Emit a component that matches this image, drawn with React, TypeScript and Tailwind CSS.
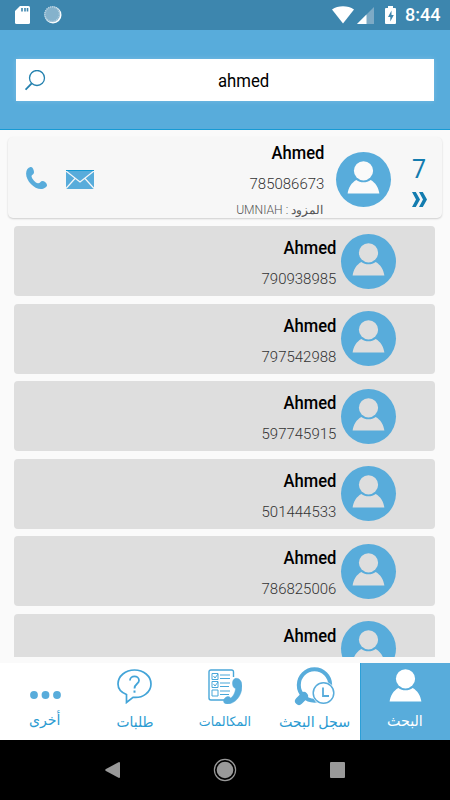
import React from "react";

type IconProps = {
    className?: string;
};

type RowProps = {
    id: number;
    name: string;
    phone?: string;
};

const contacts: RowProps[] = [
    { id: 1, name: "Ahmed", phone: "790938985" },
    { id: 2, name: "Ahmed", phone: "797542988" },
    { id: 3, name: "Ahmed", phone: "597745915" },
    { id: 4, name: "Ahmed", phone: "501444533" },
    { id: 5, name: "Ahmed", phone: "786825006" },
    { id: 6, name: "Ahmed" },
];

function Person({ className }: IconProps) {
    return (
        <svg viewBox="0 0 33 33" className={className} fill="currentColor">
            <circle cx="16.5" cy="9.8" r="9.6" />
            <path d="M.6 32.5C1.5 26.5 4.5 21.500 9.300 18.900C13.500 22 19.500 22 23.700 18.900C28.500 21.500 31.500 26.500 32.400 32.500Z" />
        </svg>
    );
}

function Avatar({ className }: IconProps) {
    return (
        <div className={`flex size-[55px] shrink-0 justify-center rounded-full bg-[#58acdb] pt-[9px] ${className}`}>
            <Person className="size-[33px]" />
        </div>
    );
}

function StatusBar() {
    return (
        <div className="flex h-[30px] shrink-0 items-center bg-[#3d86ae] pr-[10px] pl-[15px] text-white">
            <svg viewBox="0 0 15 18" className="h-[18px] w-[15px]">
                <path d="M5 0h8.500a1.500 1.500 0 0 1 1.500 1.500v15a1.500 1.500 0 0 1-1.500 1.500H1.500A1.500 1.500 0 0 1 0 16.500V5z" fill="currentColor" />
                <path d="M7 2v3.500M10 2v3.500M12.500 2v3.500" stroke="#3d86ae" strokeWidth="1.600" />
            </svg>
            <svg viewBox="0 0 18 18" className="ml-[14px] size-[18px]">
                <circle cx="9" cy="9" r="8.500" fill="#fff" />
                <circle cx="8.200" cy="8.200" r="7.800" fill="#85b2cc" />
                <circle cx="8.200" cy="8.200" r="7.300" fill="none" stroke="#b4cfdf" strokeWidth="1.600" strokeDasharray="1 1" />
            </svg>
            <svg viewBox="0 0 22 18" className="ml-auto h-[18px] w-[22px]">
                <path d="M0 3.500C6-.8 16-.8 22 3.500L11 17.500Z" fill="currentColor" />
            </svg>
            <svg viewBox="0 0 17 17" className="ml-[3px] size-[17px]">
                <path d="M17 0v17H0z" fill="#7daac5" />
                <path d="M9.500 7.500V17H0z" fill="currentColor" />
            </svg>
            <svg viewBox="0 0 11 18" className="ml-[11px] h-[18px] w-[11px]">
                <path d="M3 0h5v2h2q1 0 1 1v14q0 1-1 1H1q-1 0-1-1V3q0-1 1-1h2z" fill="currentColor" />
                <path d="M6.500 4.500 3 11h2.300v4.500L8.800 9H6.500z" fill="#3d86ae" />
            </svg>
            <span className="ml-[9px] w-[35px] text-[18px] leading-[30px] font-medium whitespace-nowrap">8:44</span>
        </div>
    );
}

function SearchHeader() {
    return (
        <div className="h-[100px] shrink-0 border-b border-[#179ad4] bg-[#58acdb] px-4 pt-[29px]">
            <div className="relative flex h-[42px] items-center justify-center bg-white pl-[38px] text-black shadow-[0_0_5px_rgba(255,255,255,0.2)]">
                <svg viewBox="0 0 21 21" className="absolute top-[11px] left-[9px] size-[21px]" fill="none" stroke="#2380ae">
                    <circle cx="12" cy="8" r="7.500" strokeWidth="1.300" />
                    <path d="M6.700 13.300 .6 19.700" strokeWidth="1.800" />
                </svg>
                <span className="scale-x-[0.93] text-[18px]">ahmed</span>
            </div>
        </div>
    );
}

function TopResult() {
    return (
        <div className="mx-2 mt-[7px] flex h-[81px] shrink-0 rounded-[5px] bg-[#f7f7f7] shadow-[0_1px_2px_rgba(0,0,0,0.18)]">
            <svg viewBox="0 0 21 22" className="mt-[30px] ml-[18px] h-[22px] w-[21px]" fill="#58acdb">
                <path d="M4.500 0C2 .7.200 2.800.1 6.500C0 13.500 8 22 15 22C18 22 20.700 20 21 18.500C21.200 16 18.500 14 16.500 14C14.500 14 14 16.500 12 16.300C9.500 16 5.500 11.500 5.500 9C6 7.500 8.200 7.500 8 5C7.800 2.500 6.500-.3 4.500 0Z" />
            </svg>
            <svg viewBox="0 0 28 19" className="mt-[32.500px] ml-[19px] h-[19px] w-[28px]">
                <path d="M0 0h28v19H0z" fill="#58acdb" />
                <path d="m0 1 14 11L28 1M0 18.500 9 8.500M28 18.500l-9-10" fill="none" stroke="#f7f7f7" strokeWidth="1.200" />
                <path d="M0 .5h28" stroke="#1599d3" />
            </svg>
            <div className="ml-auto flex w-[150px] flex-col items-end whitespace-nowrap">
                <span className="mt-[4px] origin-right scale-x-[0.92] text-[18px] leading-6 font-medium text-black">Ahmed</span>
                <span className="mt-[9px] origin-right scale-x-[1.02] text-[14.700px] leading-5 font-light text-[#333]">785086673</span>
                <span dir="rtl" className="mt-[6px] mr-px origin-right scale-x-[1.01] text-[12px] leading-5 font-light text-[#555]">المزود : UMNIAH</span>
            </div>
            <Avatar className="mt-[14.500px] ml-3 text-[#fafafa]" />
            <div className="flex w-[51px] flex-col items-center pl-[5px] text-[#137caf]">
                <span className="mt-[17px] text-[25px] leading-8">7</span>
                <svg viewBox="0 0 15 15" className="mt-[6px] size-[15px]" fill="currentColor">
                    <path d="M0 0h3.800l4.200 7.500L3.800 15H0l4-7.500zM7 0h3.800L15 7.500 10.800 15H7l4-7.500z" />
                </svg>
            </div>
        </div>
    );
}

function ContactRow({ name, phone }: RowProps) {
    return (
        <div className="flex h-[70px] shrink-0 items-center justify-end rounded-[4px] bg-[#dedede] pr-[39.400px]">
            <div className="mr-[5px] flex h-full flex-col items-end">
                <span className="mt-[10px] origin-right scale-x-[0.92] text-[18px] leading-6 font-medium text-black">{name}</span>
                {phone && (
                    <span className="mt-[9px] origin-right scale-x-[1.02] text-[14.700px] leading-5 font-light text-[#333]">{phone}</span>
                )}
            </div>
            <Avatar className="text-[#dedede]" />
        </div>
    );
}

function BottomNav() {
    return (
        <div className="grid h-[77px] shrink-0 grid-cols-5 bg-white text-[#2c9bd2]">
            <div className="flex flex-col items-center">
                <svg viewBox="0 0 31 8" className="mt-[28px] h-2 w-[31px]" fill="#58acdb">
                    <circle cx="4" cy="4" r="3.900" />
                    <circle cx="15.500" cy="4" r="3.900" />
                    <circle cx="27" cy="4" r="3.900" />
                </svg>
                <span className="mt-[9px] scale-x-[0.94] text-[15px] leading-6">أخرى</span>
            </div>
            <div className="flex flex-col items-center">
                <svg viewBox="0 0 35 35" className="mt-[6px] mr-px size-[35px]" fill="none" stroke="#42a4d8" strokeWidth="1.700">
                    <path d="M9.500 25.500V33.500L16 28.300C26 29.500 34 23 34 15C34 7 26.500 1 17.500 1C8.500 1 1 7 1 15C1 19.500 4.500 23.500 9.500 25.500Z" />
                    <path d="M13 11.500C13 6 22 6 22 11.500C22 15 17.500 14.500 17.500 19.500" strokeWidth="1.800" />
                    <path d="M17.500 21.500v2.200" strokeWidth="2" />
                </svg>
                <span className="mt-[6px] scale-x-[0.92] text-[15px] leading-6">طلبات</span>
            </div>
            <div className="flex flex-col items-center">
                <svg viewBox="0 0 34 35" className="mt-[6px] h-[35px] w-[34px]" fill="none" stroke="#49a7d9">
                    <path d="M25.500 8V3Q25.500 1 23.500 1H3Q1 1 1 3v26q0 2 2 2h15" strokeWidth="1.400" />
                    <path d="M4 4.500h6v6H4zM4 12.500h6v6H4zM4 21h6v6H4zM12 6h10M12 9.500h10M12 14h10M12 17.500h9M12 22h10M12 25.500h9" />
                    <path d="m5.500 7 1.500 2 3-4M5.500 15l1.500 2 3-4" />
                    <path d="M27 9.500C31 8.500 34 12 34 17C34 27 27 35 19 35C16 35 14.500 32 16.500 29.500C19 27 21 27 22.500 29C25 28 27.500 23 27.500 19.500C25.500 19 24.500 17 24.500 14Q24.500 10.500 27 9.500Z" fill="#58acdb" stroke="#58acdb" strokeWidth=".5" />
                </svg>
                <span className="mt-[6px] scale-x-[0.97] text-[13px] leading-6">المكالمات</span>
            </div>
            <div className="flex flex-col items-center">
                <svg viewBox="0 0 41 39" className="mt-[4px] mr-[2px] h-[39px] w-[41px]" fill="none">
                    <circle cx="20.500" cy="18" r="15.700" stroke="#58acdb" strokeWidth="4" />
                    <path d="M5 34 10 29" stroke="#58acdb" strokeWidth="8" strokeLinecap="round" />
                    <circle cx="29.500" cy="26" r="11.500" fill="#fff" />
                    <circle cx="29.500" cy="26" r="10.300" stroke="#58acdb" strokeWidth="1.500" />
                    <path d="M29 20.500V29h6" stroke="#58acdb" strokeWidth="1.800" />
                </svg>
                <span className="mt-[4px] scale-x-[0.95] text-[15px] leading-6 whitespace-nowrap">سجل البحث</span>
            </div>
            <div className="flex flex-col items-center border-l border-[#2c9fd7] bg-[#58acdb] text-white">
                <Person className="mt-[6px] mr-px size-[33px]" />
                <span className="mt-[7px] mr-px scale-x-[0.95] text-[15px] leading-6">البحث</span>
            </div>
        </div>
    );
}

function SystemNav() {
    return (
        <div className="flex h-[60px] shrink-0 items-center justify-between bg-black px-[105px]">
            <svg viewBox="0 0 15 16" className="h-4 w-[15px]" fill="#999">
                <path d="M14 0q1 0 1 1v14q0 1-1 1L.5 8.800Q0 8 .5 7.200z" />
            </svg>
            <svg viewBox="0 0 24 24" className="size-6">
                <circle cx="12" cy="12" r="8.300" fill="#999" />
                <circle cx="12" cy="12" r="10.600" fill="none" stroke="#999" strokeWidth="1.200" />
            </svg>
            <div className="h-4 w-[15px] rounded-[1px] bg-[#999]" />
        </div>
    );
}

export default function App() {
    return (
        <div className="flex h-[800px] w-[450px] flex-col overflow-hidden bg-[#fafafa] font-[Roboto,'DejaVu_Sans',sans-serif]">
            <StatusBar />
            <SearchHeader />
            <TopResult />
            <div className="mt-[8.400px] mr-[14.600px] mb-[6px] ml-[14.400px] flex min-h-0 flex-1 flex-col gap-[7.500px] overflow-hidden">
                {contacts.map((contact) => (
                    <ContactRow key={contact.id} {...contact} />
                ))}
            </div>
            <BottomNav />
            <SystemNav />
        </div>
    );
}
